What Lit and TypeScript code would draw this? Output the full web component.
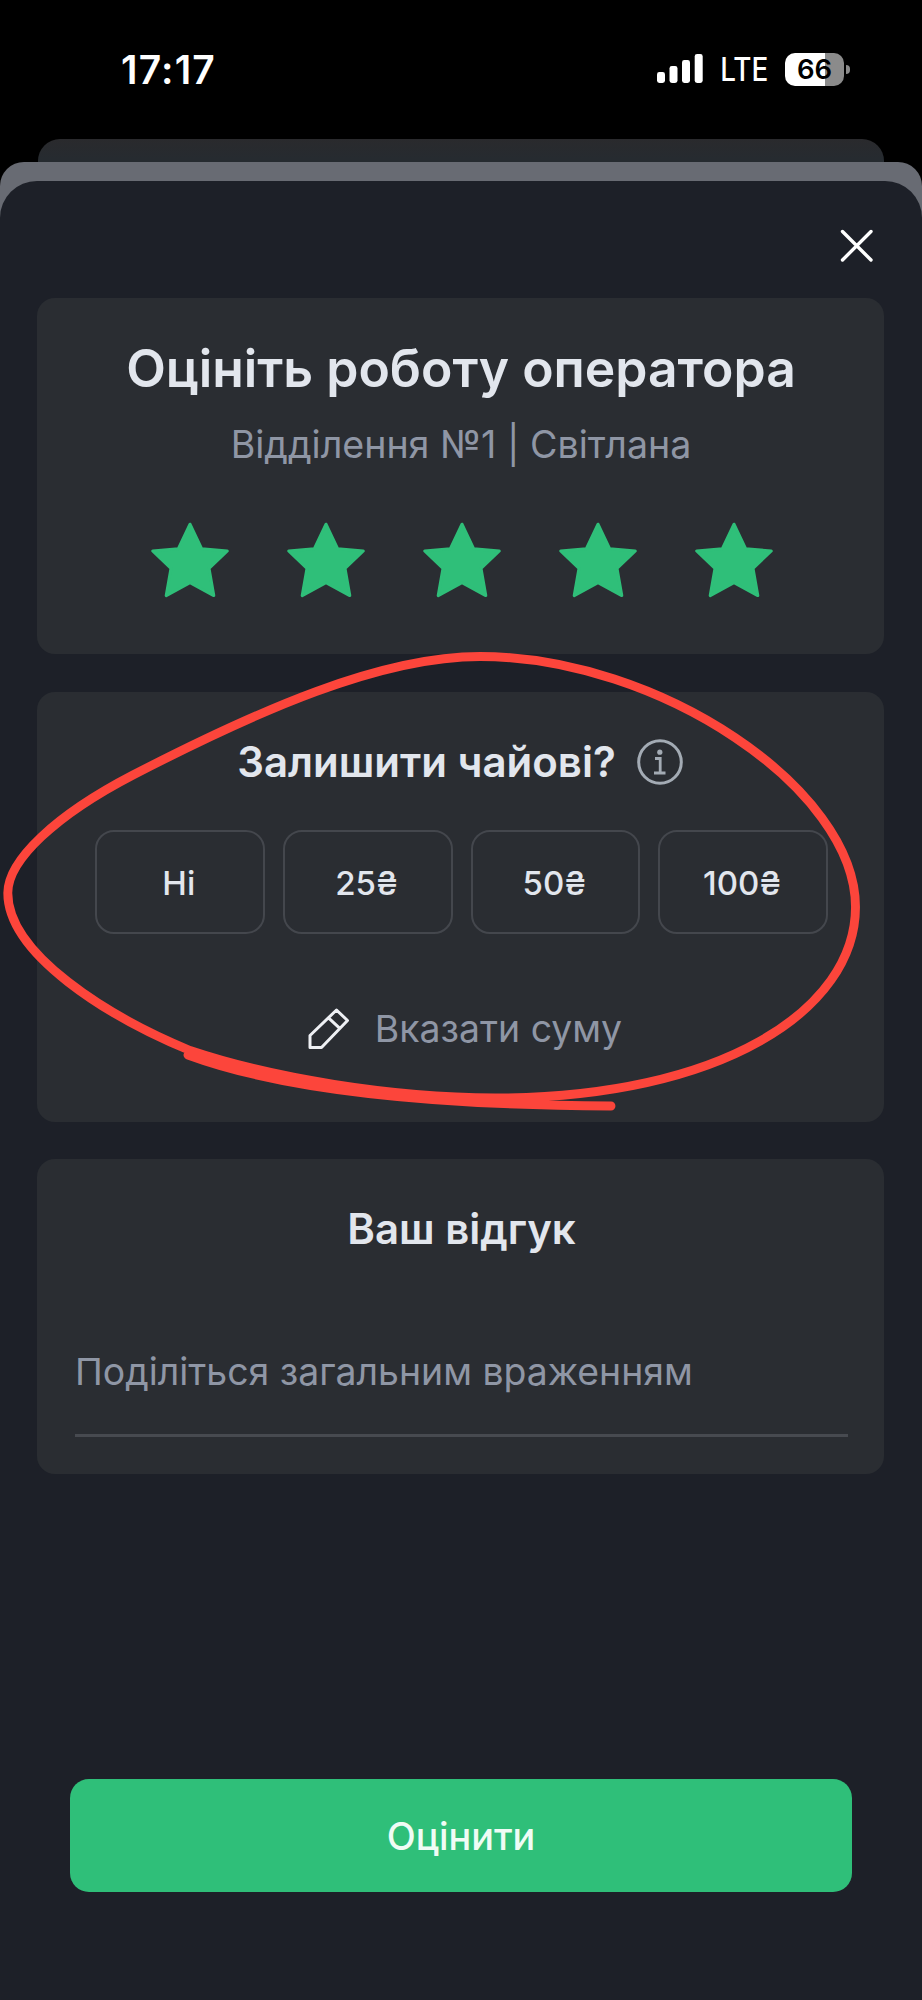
import { LitElement, html, css } from "lit";
import { customElement } from "lit/decorators.js";

/** Hand-drawn loop around the tips card: closes at the bottom left and runs on below its own start. */
const LOOP = [
  "M188 1055C260 1081.5 380 1105 611 1106",
  "M190 1050.5C272 1078 390 1097.5 495 1098",
  "C721 1098 855.5 1010 855.5 907",
  "C855.5 789 659 656.5 480 656.5",
  "C380 656.5 258 710.6 133 775",
  "C56 815 7.8 860 7.8 893",
  "C7.8 954 107.6 1016.5 190 1050.5",
].join(" ");

const TIPS = ["Ні", "25₴", "50₴", "100₴"];

@customElement("status-bar")
class StatusBar extends LitElement {
  static styles = css`
    :host { display: flex; justify-content: space-between; align-items: center; height: 139px;
      padding: 0 72px 1px 121px; box-sizing: border-box; color: #fff; }
    .time { font-size: 39px; font-weight: 600; letter-spacing: 1.2px; }
    .right { display: flex; align-items: center; }
    .signal { margin-right: 10px; }
    .net { font-size: 32px; font-weight: 500; margin-right: 17px; transform: scaleX(0.87);
      transform-origin: right; }
    .battery { display: flex; align-items: center; gap: 2px; }
    .cell { width: 59px; height: 33px; border-radius: 10px; display: grid; place-items: center;
      background: linear-gradient(90deg, #fff 0 40px, #8b8b8b 40px); color: #000;
      font-size: 27.5px; font-weight: 600; line-height: 33px; }
    .nub { width: 4px; height: 9px; border-radius: 0 4px 4px 0; background: #8b8b8b; }
  `;
  render() {
    return html`
      <span class="time">17:17</span>
      <div class="right">
        <svg class="signal" width="46" height="30" viewBox="0 0 46 30" fill="#fff">
          <rect x="0" y="18" width="8" height="11" rx="2.4" />
          <rect x="12.5" y="12" width="8" height="17" rx="2.4" />
          <rect x="25" y="6" width="8" height="23" rx="2.4" />
          <rect x="37.7" y="0" width="8" height="29" rx="2.4" />
        </svg>
        <span class="net">LTE</span>
        <div class="battery"><div class="cell"><span>66</span></div><div class="nub"></div></div>
      </div>`;
  }
}

@customElement("app-root")
class AppRoot extends LitElement {
  static styles = css`
    :host { display: block; position: relative; width: 922px; height: 2000px; overflow: hidden;
      background: #000; font-family: Inter, "Noto Sans", sans-serif; }
    .back { height: 40px; margin: 0 38px; border-radius: 22px 22px 0 0;
      background: linear-gradient(#2a2a2d, #262b30 20px); }
    .middle { margin-top: -17px; height: 1838px; border-radius: 24px 24px 0 0; padding-top: 19px;
      box-sizing: border-box; background: #686b73; }
    .sheet { height: 1819px; border-radius: 37px 37px 0 0; background: #1d2028; padding: 0 38px 0 37px;
      box-sizing: border-box; display: flex; flex-direction: column; }
    .bar { height: 117px; flex: none; display: flex; justify-content: flex-end; padding: 47px 9px 0 0;
      box-sizing: border-box; }
    .card { flex: none; box-sizing: border-box; background: #2a2d32; border-radius: 18px;
      display: flex; flex-direction: column; align-items: center; margin-bottom: 38px; }
    .rate { height: 356px; padding-left: 1px; }
    .tips { height: 430px; margin-bottom: 37px; padding-left: 2px; }
    .review { height: 315px; padding-left: 2px; }
    .t { white-space: nowrap; color: #e2e6ed; }
    .h1 { font-size: 51.6px; font-weight: 600; line-height: 60px; margin-top: 40px; }
    .sub { font-size: 37.6px; line-height: 44px; margin-top: 25px; color: #8f96a5; }
    .stars { display: flex; gap: 56.2px; margin-top: 53px; padding-left: 2px; }
    .head { display: flex; align-items: center; gap: 21px; margin-top: 46px; height: 48px; padding-right: 3px; }
    .h2 { font-size: 42px; font-weight: 600; line-height: 48px; }
    .opts { display: flex; gap: 18px; margin-top: 44px; }
    .opt { width: 169.8px; height: 104px; box-sizing: border-box; border: 2px solid #44474d;
      border-radius: 19px; display: grid; place-items: center; font-size: 33px; font-weight: 500;
      padding: 1px 2px 0 0; }
    .sum { display: flex; align-items: center; gap: 25px; margin-top: 73px; height: 44px; padding-left: 7px; }
    .sum .t { font-size: 37.4px; color: #8f96a5; line-height: 44px; }
    .review .h2 { margin-top: 46px; }
    .field { width: 773px; height: 87px; margin-top: 97px; box-sizing: border-box;
      border-bottom: 3px solid #474a50; font-size: 37.4px; line-height: 44px; color: #8f96a5;
      white-space: nowrap; }
    .submit { flex: none; width: 782px; height: 113px; margin: 267px 0 0 33px; border-radius: 19px;
      background: #2fbf79; display: grid; place-items: center; font-size: 37.8px; font-weight: 500; }
    .submit .t { color: #effcf5; }
    .mark { position: absolute; left: 0; top: 0; pointer-events: none; }
  `;
  render() {
    return html`
      <status-bar></status-bar>
      <div class="back"></div>
      <div class="middle">
        <main class="sheet">
          <div class="bar">
            <svg width="36" height="36" viewBox="0 0 36 36" fill="none" stroke="#fff" stroke-width="3.4" stroke-linecap="round">
              <path d="M3.5 3.5 32 32M32 3.5 3.5 32" />
            </svg>
          </div>
          <section class="card rate">
            <div class="t h1">Оцініть роботу оператора</div>
            <div class="t sub">Відділення №1 | Світлана</div>
            <div class="stars">
              ${[1, 2, 3, 4, 5].map(() => html`<svg width="80" height="78" viewBox="0 0 80 78">
                <path d="M40 4.2 51.6 28.7 77.3 31 59 48.3 63.8 75.6 40 62.8 16.2 75.6 21 48.3 2.7 31 28.4 28.7Z"
                  fill="#2fbf79" stroke="#2fbf79" stroke-width="3" stroke-linejoin="round" /></svg>`)}
            </div>
          </section>
          <section class="card tips">
            <div class="head">
              <span class="t h2">Залишити чайові?</span>
              <svg width="46" height="46" viewBox="0 0 46 46" fill="none" stroke="#a3abb4" stroke-width="3">
                <circle cx="23" cy="23" r="21.3" />
                <path d="M18 19.5h5.2v14.5M17 34h11.5" stroke-width="2.8" />
                <circle cx="22.8" cy="13.2" r="2.6" fill="#a3abb4" stroke="none" />
              </svg>
            </div>
            <div class="opts">${TIPS.map((x) => html`<div class="opt"><span class="t">${x}</span></div>`)}</div>
            <div class="sum">
              <svg width="42" height="42" viewBox="0 0 42 42" fill="none" stroke="#eef0f4" stroke-width="3" stroke-linejoin="round">
                <path d="M28.5 2 39.5 12.5 13.5 39.5H2V27.5Z M20.5 9.8 31.8 20.4" />
              </svg>
              <span class="t">Вказати суму</span>
            </div>
          </section>
          <section class="card review">
            <div class="t h2">Ваш відгук</div>
            <div class="field">Поділіться загальним враженням</div>
          </section>
          <div class="submit"><span class="t">Оцінити</span></div>
        </main>
      </div>
      <svg class="mark" width="922" height="2000" viewBox="0 0 922 2000" fill="none" stroke="#fc453b"
        stroke-linecap="round" stroke-linejoin="round">
        <path d=${LOOP} stroke-width="8.9" />
      </svg>`;
  }
}
